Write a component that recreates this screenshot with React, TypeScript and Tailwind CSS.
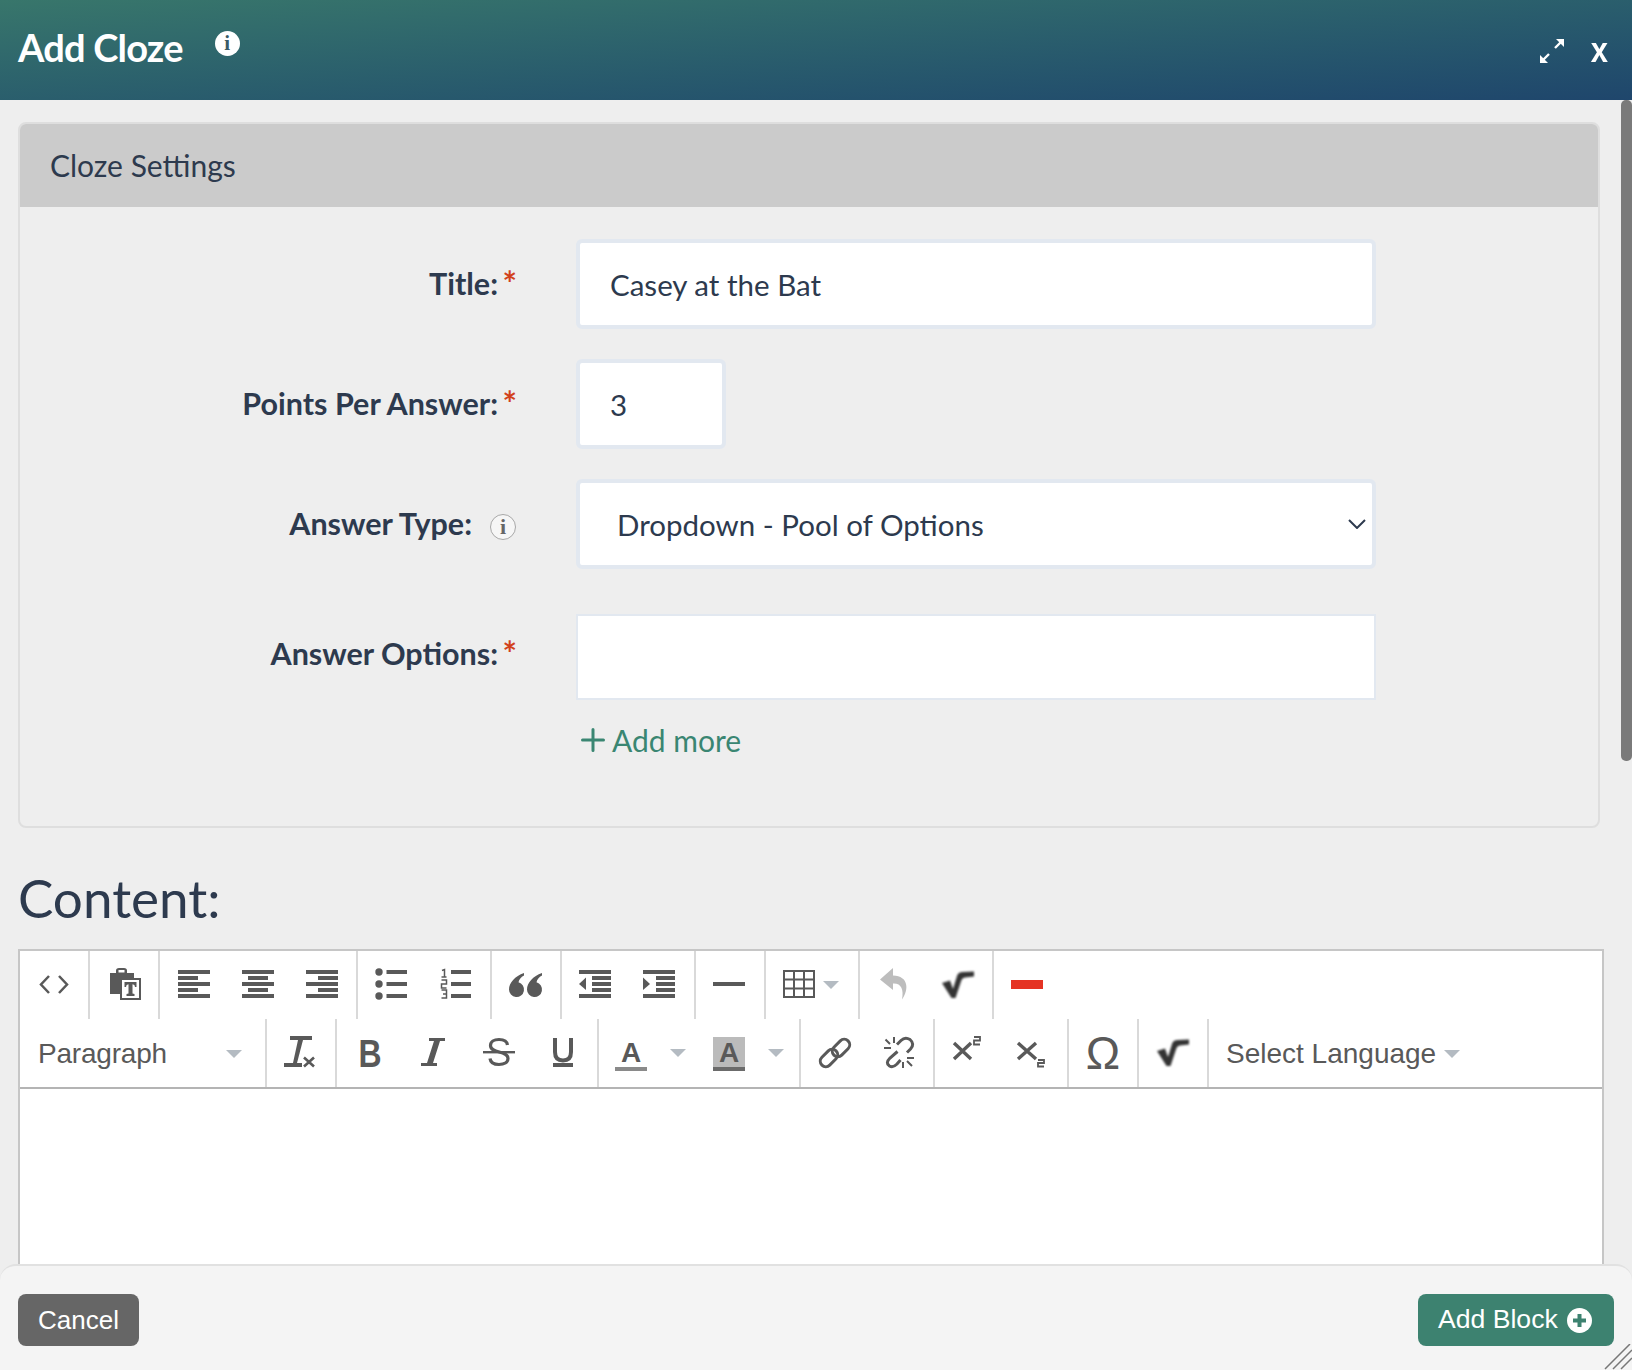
import React from "react";

const Caret = () => (
  <svg width="16" height="8" viewBox="0 0 16 8" className="shrink-0"><path d="M0 0H16L8 8Z" fill="#b4bbc2" /></svg>
);

const Ico = ({ children }: { children: React.ReactNode }) => (
  <svg width="32" height="32" viewBox="0 0 32 32" className="shrink-0 overflow-visible" fill="#595959">{children}</svg>
);

const Bars = ({ rows }: { rows: [number, number][] }) => (
  <Ico>
    {rows.map(([x, w], i) => (
      <rect key={i} x={x} y={1 + i * 6} width={w} height="4" />
    ))}
  </Ico>
);

const Btn = ({ children }: { children: React.ReactNode }) => (
  <div className="w-16 h-full flex items-center justify-center shrink-0">{children}</div>
);

const Group = ({ children, first }: { children: React.ReactNode; first?: boolean }) => (
  <div className={first ? "h-full flex pl-[2px] pr-[2px] shrink-0" : "h-full flex pl-[2px] pr-[2px] border-l-2 border-[#d9d9d9] shrink-0"}>{children}</div>
);

const Sqrt = () => (
  <Ico>
    <path d="M0 14L8 11.500L11 20L15 7Q16 3 21 3L32 2.500V7.500L23 8.500Q20.500 8.500 19.500 11L13.500 29H9.500Z" fill="#333" style={{ filter: "blur(0.8px)" }} />
  </Ico>
);

const Req = () => <sup className="text-[#d2411c] font-bold text-[34px] absolute -right-[1px] top-[3px] leading-none">*</sup>;

const Label = ({ children, up }: { children: React.ReactNode; up?: boolean }) => (
  <div className={up ? "w-[496px] shrink-0 relative -mt-[8px] pr-[18px] text-right font-bold text-[30.5px] text-[#2d3a4e] leading-[40px]" : "w-[496px] shrink-0 relative -mt-[2px] pr-[18px] text-right font-bold text-[30.5px] text-[#2d3a4e] leading-[40px]"}>
    {children}
    <Req />
  </div>
);

const inputCls = "block bg-white border-4 border-[#e2e8f0] rounded-[6px] h-[90px] text-[29.5px] text-[#2d3a4e] outline-none font-[Lato,sans-serif] pl-[30px]";

export default function App() {
  return (
    <div className="relative w-[1632px] h-[1370px] overflow-hidden bg-[#eeeeee] font-[Lato,sans-serif]">
      <header className="h-[100px] bg-linear-to-br from-[#38766b] to-[#1f466c] flex items-start text-white">
        <h1 className="ml-[18px] mt-[23px] text-[38px] leading-[48px] font-bold tracking-[-0.8px]">Add Cloze</h1>
        <div className="ml-[32px] mt-[31px] w-[25px] h-[25px] rounded-full bg-white flex items-center justify-center text-[#3a5a66] text-[21px] font-bold font-['Liberation_Serif',serif] leading-none">i</div>
        <svg width="26" height="26" viewBox="0 0 26 26" className="ml-auto mt-[38px]" fill="none" stroke="#fff" strokeWidth="2.4">
          <path d="M2 24L10 16M16 10L24 2" />
          <path d="M17 1H25V9Z" fill="#fff" stroke="none" />
          <path d="M1 17V25H9Z" fill="#fff" stroke="none" />
        </svg>
        <div className="ml-[26px] mr-[24px] mt-[30px] text-[31px] leading-[40px] font-bold font-['Liberation_Sans',sans-serif] scale-y-[1.15]">x</div>
      </header>

      <main className="pl-[18px] pt-[22px]">
        <section className="w-[1582px] h-[706px] border-2 border-[#dedede] rounded-[8px] overflow-hidden">
          <div className="h-[83px] bg-[#cbcbcb] pl-[30px] flex items-center text-[30px] text-[#2d3a4e]">Cloze Settings</div>
          <div className="pt-[32px] flex flex-col">
            <div className="flex items-center gap-[60px]">
              <Label>Title:</Label>
              <input readOnly value="Casey at the Bat" className={inputCls + " w-[800px]"} />
            </div>
            <div className="flex items-center gap-[60px] mt-[30px]">
              <Label>Points Per Answer:</Label>
              <input readOnly value="3" className={inputCls + " w-[150px]"} />
            </div>
            <div className="flex items-center gap-[60px] mt-[30px]">
              <div className="w-[496px] shrink-0 flex items-center justify-end">
                <span className="font-bold text-[30.5px] text-[#2d3a4e] leading-[40px] mr-[18px] -mt-[2px]">Answer Type:</span>
                <span className="w-[26px] h-[26px] mt-[6px] rounded-full bg-[#f6f6f6] border border-[#a8a8a8] flex items-center justify-center text-[#666] text-[22px] font-bold font-['Liberation_Serif',serif] leading-none">i</span>
              </div>
              <div className="relative w-[800px]">
                <select className={inputCls + " w-full appearance-none pl-[37px] pt-[2px]"} defaultValue="d">
                  <option value="d">Dropdown - Pool of Options</option>
                </select>
                <svg width="18" height="10" viewBox="0 0 18 10" className="absolute right-[10px] top-[40px]" fill="none" stroke="#2d3a4e" strokeWidth="2"><path d="M1 1L9 9L17 1" /></svg>
              </div>
            </div>
            <div className="flex items-center gap-[60px] mt-[45px]">
              <Label up>Answer Options:</Label>
              <div className="w-[800px] h-[86px] bg-white border-2 border-[#e2e8f0]" />
            </div>
            <div className="flex items-center ml-[561px] mt-[20px] text-[#3a8672] text-[30px] leading-[40px]">
              <svg width="24" height="24" viewBox="0 0 24 24" fill="none" stroke="#3a8672" strokeWidth="3" strokeLinecap="round"><path d="M12 1.500V22.500M1.500 12H22.500" /></svg>
              <span className="ml-[7px]">Add more</span>
            </div>
          </div>
        </section>

        <h2 className="mt-[33px] text-[53px] leading-[74px] text-[#2d3a4e]">Content:</h2>

        <div className="mt-[14px] w-[1586px] h-[430px] bg-white border-t-2 border-l-2 border-r-2 border-[#c6c6c6]">
          <div className="h-[68px] flex items-center">
            <Group first>
              <Btn>
                <Ico><path d="M11 7L3 15.500L11 24M21 7L29 15.500L21 24" fill="none" stroke="#595959" strokeWidth="2.500" /></Ico>
              </Btn>
            </Group>
            <Group>
              <Btn>
                <Ico>
                  <path d="M2 4H8V1.500Q8 -1 11 -1H16Q19 -1 19 1.500V4H26V25H2Z" />
                  <rect x="10.500" y="1" width="6" height="2.500" fill="#fff" />
                  <rect x="13" y="10" width="19" height="20" fill="#fff" stroke="#595959" strokeWidth="2" />
                  <path d="M16.500 13H28.500V18H27Q27 15.500 24.500 15.300V24.500L26.500 25V27H18.500V25L20.500 24.500V15.300Q18 15.500 18 18H16.500Z" />
                </Ico>
              </Btn>
            </Group>
            <Group>
              <Btn><Bars rows={[[0, 32], [0, 20], [0, 32], [0, 20], [0, 32]]} /></Btn>
              <Btn><Bars rows={[[0, 32], [6, 20], [0, 32], [6, 20], [0, 32]]} /></Btn>
              <Btn><Bars rows={[[0, 32], [12, 20], [0, 32], [12, 20], [0, 32]]} /></Btn>
            </Group>
            <Group>
              <Btn>
                <Ico>
                  <circle cx="3" cy="3" r="3.700" /><circle cx="3" cy="15" r="3.700" /><circle cx="3" cy="27" r="3.700" />
                  <rect x="10.500" y="1" width="20.500" height="4" /><rect x="10.500" y="13" width="20.500" height="4" /><rect x="10.500" y="25" width="20.500" height="4" />
                </Ico>
              </Btn>
              <Btn>
                <Ico>
                  <path d="M2 1.500L4.500 0.500V8M1.500 8H6.500M1.500 11H6.500V15H1.500V19H6.500M1.500 21H6.500V29H1.500M3 25H6.500" fill="none" stroke="#595959" strokeWidth="1.500" />
                  <rect x="11" y="1" width="20" height="4" /><rect x="11" y="13" width="20" height="4" /><rect x="11" y="25" width="20" height="4" />
                </Ico>
              </Btn>
            </Group>
            <Group>
              <Btn>
                <Ico>
                  <path d="M14 4C5 7 -1 14 -1 20.500A7.500 7.500 0 1 0 8.500 13.300C9 10.500 11 8 14 6.500Z" />
                  <path d="M32 4C23 7 17 14 17 20.500A7.500 7.500 0 1 0 26.500 13.300C27 10.500 29 8 32 6.500Z" />
                </Ico>
              </Btn>
            </Group>
            <Group>
              <Btn>
                <Ico>
                  <rect x="-1" y="1" width="32" height="4" /><rect x="12" y="7" width="19" height="4" /><rect x="12" y="13" width="19" height="4" /><rect x="12" y="19" width="19" height="4" /><rect x="-1" y="25" width="32" height="4" />
                  <path d="M6 8.500V21L-1 15Z" />
                </Ico>
              </Btn>
              <Btn>
                <Ico>
                  <rect x="-1" y="1" width="32" height="4" /><rect x="12" y="7" width="19" height="4" /><rect x="12" y="13" width="19" height="4" /><rect x="12" y="19" width="19" height="4" /><rect x="-1" y="25" width="32" height="4" />
                  <path d="M-1 8.500V21L6 15Z" />
                </Ico>
              </Btn>
            </Group>
            <Group>
              <Btn><Ico><rect x="-1" y="13" width="32" height="4" /></Ico></Btn>
            </Group>
            <Group>
              <div className="w-[88px] h-full flex items-center pl-[15px] gap-[8px]">
                <Ico>
                  <path d="M1 2H31V28H1ZM11 2V28M21 2V28M1 10.500H31M1 19.500H31" fill="none" stroke="#595959" strokeWidth="2" />
                </Ico>
                <Caret />
              </div>
            </Group>
            <Group>
              <Btn>
                <Ico><path d="M15 -1L2 10.500L15 21V14.500C23 14 26 20 24 30.500C31 21 31 7 15 6.500Z" fill="#bdbdbd" /></Ico>
              </Btn>
              <Btn><Sqrt /></Btn>
            </Group>
            <Group>
              <Btn><Ico><rect x="-1" y="11" width="32" height="9" fill="#e53323" /></Ico></Btn>
            </Group>
          </div>

          <div className="h-[68px] flex items-center border-b-2 border-[#b4b4b4] box-content text-[#595959] font-['Liberation_Sans',sans-serif]">
            <div className="w-[245px] h-full flex items-center justify-between pl-[18px] pr-[23px] pt-[1px] shrink-0 text-[28px] tracking-[-0.2px]">
              <span>Paragraph</span>
              <Caret />
            </div>
            <Group>
              <Btn>
                <Ico>
                  <rect x="5" y="-1" width="22" height="4" />
                  <path d="M13 3H18L12 26H8Z" />
                  <rect x="-1" y="26" width="18" height="4" />
                  <path d="M19 20.500L29 29.500M29 20.500L19 29.500" stroke="#595959" strokeWidth="2.600" />
                </Ico>
              </Btn>
            </Group>
            <Group>
              <Btn><span className="text-[39px] font-bold leading-none scale-x-[0.82] -translate-x-[1px]">B</span></Btn>
              <Btn>
                <Ico><path d="M10 1H26V4H21L14 26H18V29H2V26H8L15 4H10Z" /></Ico>
              </Btn>
              <Btn>
                <Ico>
                  <path d="M24.500 8C24 4 20 2.500 16 2.500C11 2.500 7.500 4.500 7.500 8.500C7.500 17 25 13 25 21.500C25 25.500 21 27.500 16 27.500C11 27.500 7.500 25.500 7 21.500" fill="none" stroke="#595959" strokeWidth="3.200" />
                  <rect x="0" y="14" width="32" height="2.400" />
                </Ico>
              </Btn>
              <Btn>
                <Ico>
                  <path d="M8 1V15C8 21 11 23.500 16 23.500C21 23.500 24 21 24 15V1" fill="none" stroke="#595959" strokeWidth="4" />
                  <rect x="6" y="26" width="20" height="4" />
                </Ico>
              </Btn>
            </Group>
            <Group>
              <div className="w-[98px] h-full flex items-center pl-[14px] gap-[23px] shrink-0">
                <div className="relative w-8 h-8 shrink-0 flex justify-center">
                  <span className="text-[28px] leading-[31px] font-bold">A</span>
                  <span className="absolute left-0 top-[30px] w-8 h-1 bg-[#8a8a8a]" />
                </div>
                <Caret />
              </div>
              <div className="w-[98px] h-full flex items-center pl-[14px] gap-[23px] shrink-0">
                <div className="relative w-8 h-8 shrink-0 flex justify-center bg-[#bbbbbb]">
                  <span className="text-[28px] leading-[31px] font-bold">A</span>
                  <span className="absolute left-0 top-[30px] w-8 h-1 bg-[#6b6b6b]" />
                </div>
                <Caret />
              </div>
            </Group>
            <Group>
              <Btn>
                <Ico>
                  <g fill="none" stroke="#595959" strokeWidth="3">
                    <rect x="0" y="15.500" width="20" height="11" rx="5.500" transform="rotate(-45 10 21)" />
                    <rect x="12" y="5.500" width="20" height="11" rx="5.500" transform="rotate(-45 22 11)" />
                  </g>
                </Ico>
              </Btn>
              <Btn>
                <Ico>
                  <g fill="none" stroke="#595959" strokeWidth="3">
                    <path d="M14.500 14.500L7 21Q2 26 6.500 29Q10 31 14 27L17.500 23" />
                    <path d="M14 7.500L18 3.500Q22 -0.500 27 2.500Q32 7 27.500 12L24 15.500" />
                  </g>
                  <path d="M1 11H8M11 0V6M2.500 2.500L7 7M24 21H31M20 25V31M24 24L29 29" fill="none" stroke="#595959" strokeWidth="2" />
                </Ico>
              </Btn>
            </Group>
            <Group>
              <Btn>
                <Ico>
                  <path d="M1 6L18 22M18 6L1 22" fill="none" stroke="#595959" strokeWidth="3.400" />
                  <path d="M21 0H27V3.500H21V7.500H27" fill="none" stroke="#595959" strokeWidth="1.800" />
                </Ico>
              </Btn>
              <Btn>
                <Ico>
                  <path d="M1 6L19 22M19 6L1 22" fill="none" stroke="#595959" strokeWidth="3.400" />
                  <path d="M21 23H27V26H21V29.500H27" fill="none" stroke="#595959" strokeWidth="1.800" />
                </Ico>
              </Btn>
            </Group>
            <Group>
              <Btn><span className="text-[46px] leading-none">Ω</span></Btn>
            </Group>
            <Group>
              <Btn><Sqrt /></Btn>
            </Group>
            <div className="h-full flex items-center border-l-2 border-[#d9d9d9] pl-[17px] pt-[1px] gap-[8px] text-[28px]">
              <span>Select Language</span>
              <Caret />
            </div>
          </div>
        </div>
      </main>

      <div className="absolute right-0 top-[100px] w-[11px] h-[661px] bg-[#7a7a7a] rounded-[5px]" />

      <footer className="absolute left-0 right-0 bottom-0 h-[106px] bg-[#f4f4f4] border-t-2 border-[#e1e1e1] rounded-t-[16px] flex items-start justify-between pl-[18px] pr-[18px] pt-[28px] font-['Liberation_Sans',sans-serif] text-white text-[26px]">
        <button className="w-[121px] h-[52px] bg-[#666666] rounded-[8px]">Cancel</button>
        <button className="w-[196px] h-[52px] bg-[#3d8270] rounded-[8px] flex items-center pl-[20px] text-[26.6px]">
          <span>Add Block</span>
          <svg width="25" height="25" viewBox="0 0 25 25" className="ml-[9px]">
            <circle cx="12.500" cy="12.500" r="12.500" fill="#fff" />
            <path d="M12.500 6V19M6 12.500H19" stroke="#3d8270" strokeWidth="4" />
          </svg>
        </button>
      </footer>
      <svg width="28" height="26" viewBox="0 0 28 26" className="absolute right-0 bottom-0" fill="none" stroke="#777" strokeWidth="1.500">
        <path d="M1 25L26 0M9 25L28 6M17 25L28 14" />
      </svg>
    </div>
  );
}
